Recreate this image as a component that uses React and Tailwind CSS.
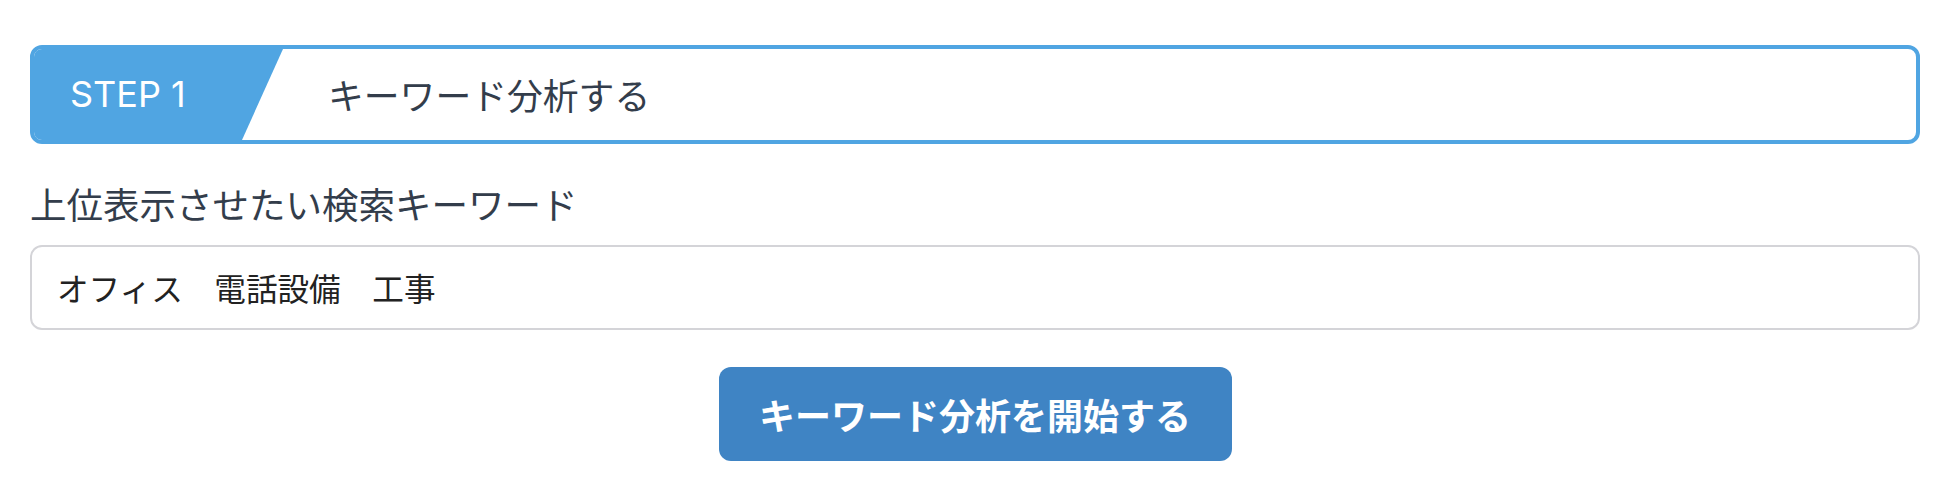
export default function App() {
  const jp = { fontFamily: '"Noto Sans CJK JP", "Noto Sans", sans-serif' };
  return (
    <div className="w-full bg-white px-[30px] pt-[45px] pb-[30px]" style={jp}>
      <div className="flex h-[99px] w-full overflow-hidden rounded-[12px] border-[4px] border-[#50a5e2] bg-white">
        <div
          className="flex w-[249px] shrink-0 items-center bg-[#50a5e2] pl-[36px] pb-[2px] text-[36px] leading-none text-white"
          style={{ clipPath: 'polygon(0 0, 100% 0, calc(100% - 41px) 100%, 0 100%)', fontFamily: 'Inter, "Noto Sans", sans-serif' }}
        >
          STEP 1
        </div>
        <div className="flex items-center pl-[45px] text-[35.8px] leading-none text-[#333d4b]">
          キーワード分析する
        </div>
      </div>
      <div className="mt-[33px] text-[36.5px] leading-[54px] text-[#333d4b]">上位表示させたい検索キーワード</div>
      <div className="mt-[14px] flex h-[85px] w-full items-center rounded-[12px] border-2 border-[#d4d4d8] bg-white pl-[25px] text-[31.6px] text-[#222]">
        オフィス　電話設備　工事
      </div>
      <div className="mt-[37px] flex justify-center">
        <button className="flex h-[94px] w-[513px] items-center justify-center rounded-[12px] bg-[#3f84c4] text-[36px] font-bold leading-none text-white">
          キーワード分析を開始する
        </button>
      </div>
    </div>
  );
}
